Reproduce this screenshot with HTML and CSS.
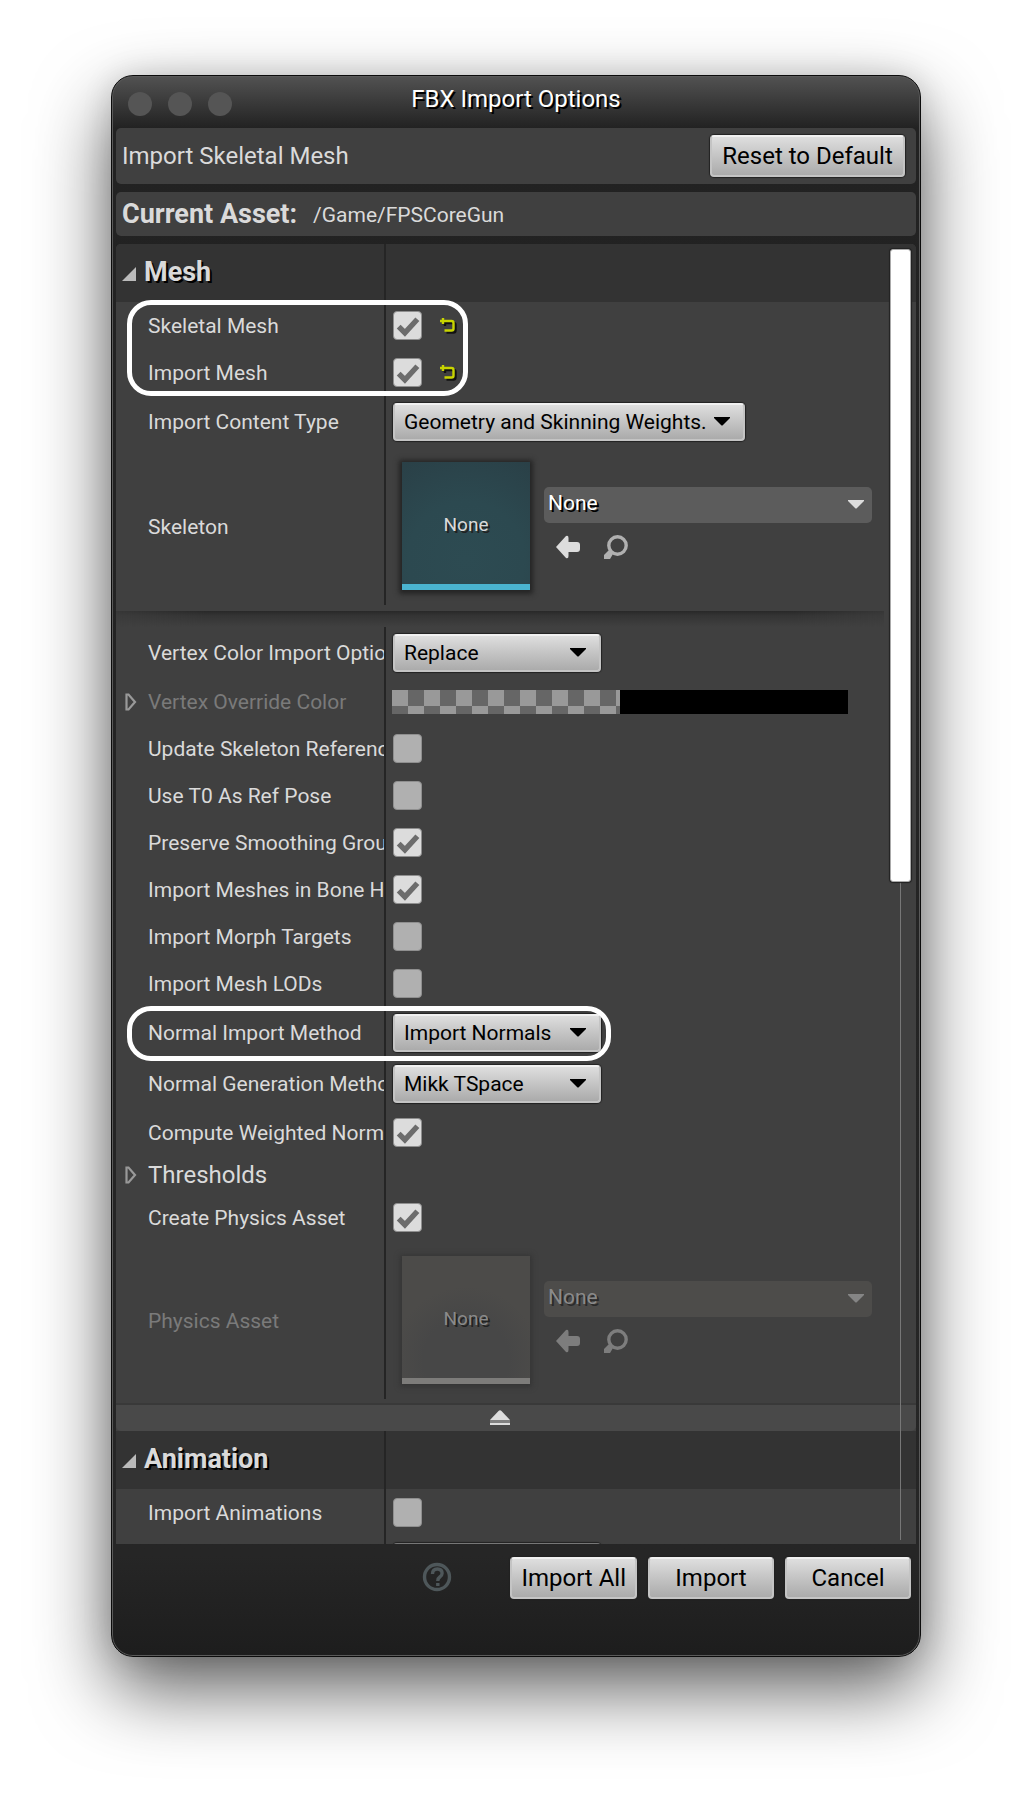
FILE: index.html
```html
<!DOCTYPE html>
<html lang="en">
<head>
<meta charset="utf-8">
<title>FBX Import Options</title>
<link rel="stylesheet" href="styles.css">
</head>
<body>
<svg class="defs" aria-hidden="true">
  <symbol id="revert" viewBox="0 0 18 18"><path d="M1 4h11.500q2 0 2 2v5.500q0 2-2 2H5.500M4 1v6" fill="none" stroke="currentColor" stroke-width="2.400"/></symbol>
  <symbol id="open" viewBox="0 0 16 16"><path d="M16 0v16H0z" fill="currentColor"/></symbol>
  <symbol id="closed" viewBox="0 0 12 18"><path d="M1.500 1.500h2L10 9l-6.500 7.500h-2z" fill="none" stroke="currentColor" stroke-width="2.200"/></symbol>
  <symbol id="use-arrow" viewBox="0 0 24 24"><path d="M0 12 10 1q2.500-1 2.500 2v4H21q3 0 3 3v4q0 3-3 3h-8.500v4q0 3-2.500 2z" fill="currentColor"/></symbol>
  <symbol id="browse" viewBox="0 0 24 24"><circle cx="13.500" cy="10.500" r="8.700" fill="none" stroke="currentColor" stroke-width="3.400"/><path d="M0 24v-4l5-5 4 4-3 5z" fill="currentColor"/></symbol>
</svg>
<main class="window">
  <header class="titlebar">
    <div class="lights"><span class="light"></span><span class="light"></span><span class="light"></span></div>
    <h1 class="title">FBX Import Options</h1>
  </header>

  <section class="panel panel-type">
    <span class="type">Import Skeletal Mesh</span>
    <button class="btn btn-reset">Reset to Default</button>
  </section>
  <section class="panel panel-asset">
    <strong class="asset-label">Current Asset:</strong>
    <span class="asset-path">/Game/FPSCoreGun</span>
  </section>

  <section class="list">
    <div class="header"><h2 class="name"><svg class="tri"><use href="#open"/></svg>Mesh</h2></div>

    <div class="marked marked-mesh">
      <div class="row"><div class="name"><label for="skeletal">Skeletal Mesh</label></div><div class="value"><input type="checkbox" id="skeletal" checked><button class="revert" aria-label="Revert"><svg><use href="#revert"/></svg></button></div></div>
      <div class="row"><div class="name"><label for="mesh">Import Mesh</label></div><div class="value"><input type="checkbox" id="mesh" checked><button class="revert" aria-label="Revert"><svg><use href="#revert"/></svg></button></div></div>
    </div>
    <div class="row row-combo"><div class="name"><label for="content">Import Content Type</label></div><div class="value"><select id="content" class="combo combo-wide"><option>Geometry and Skinning Weights.</option></select></div></div>
    <div class="row row-asset"><div class="name"><label for="skeleton">Skeleton</label></div><div class="value">
      <div class="thumb">None</div>
      <div class="picker">
        <select id="skeleton" class="asset-combo"><option>None</option></select>
        <div class="tools"><button aria-label="Use selected"><svg><use href="#use-arrow"/></svg></button><button class="dim" aria-label="Browse"><svg><use href="#browse"/></svg></button></div>
      </div>
    </div></div>
    <div class="divider"></div>

    <div class="row row-combo"><div class="name"><label for="vcolor">Vertex Color Import Option</label></div><div class="value"><select id="vcolor" class="combo"><option>Replace</option></select></div></div>
    <div class="row disabled"><div class="name"><button class="expand" aria-label="Expand"><svg><use href="#closed"/></svg></button><span>Vertex Override Color</span></div><div class="value"><div class="swatch"><span class="alpha"></span><span class="solid"></span></div></div></div>
    <div class="row"><div class="name"><label for="update">Update Skeleton Reference Pose</label></div><div class="value"><input type="checkbox" id="update"></div></div>
    <div class="row"><div class="name"><label for="t0">Use T0 As Ref Pose</label></div><div class="value"><input type="checkbox" id="t0"></div></div>
    <div class="row"><div class="name"><label for="smooth">Preserve Smoothing Groups</label></div><div class="value"><input type="checkbox" id="smooth" checked></div></div>
    <div class="row"><div class="name"><label for="bone">Import Meshes in Bone Hierarchy</label></div><div class="value"><input type="checkbox" id="bone" checked></div></div>
    <div class="row"><div class="name"><label for="morph">Import Morph Targets</label></div><div class="value"><input type="checkbox" id="morph"></div></div>
    <div class="row"><div class="name"><label for="lods">Import Mesh LODs</label></div><div class="value"><input type="checkbox" id="lods"></div></div>
    <div class="marked marked-normals">
      <div class="row row-combo"><div class="name"><label for="nimport">Normal Import Method</label></div><div class="value"><select id="nimport" class="combo"><option>Import Normals</option></select></div></div>
    </div>
    <div class="row row-combo"><div class="name"><label for="ngen">Normal Generation Method</label></div><div class="value"><select id="ngen" class="combo"><option>Mikk TSpace</option></select></div></div>
    <div class="row"><div class="name"><label for="weighted">Compute Weighted Normals</label></div><div class="value"><input type="checkbox" id="weighted" checked></div></div>
    <div class="row row-group"><div class="name"><button class="expand" aria-label="Expand"><svg><use href="#closed"/></svg></button><span>Thresholds</span></div><div class="value"></div></div>
    <div class="row"><div class="name"><label for="physics">Create Physics Asset</label></div><div class="value"><input type="checkbox" id="physics" checked></div></div>
    <div class="row row-asset disabled"><div class="name"><label for="passet">Physics Asset</label></div><div class="value">
      <div class="thumb">None</div>
      <div class="picker">
        <select id="passet" class="asset-combo" disabled><option>None</option></select>
        <div class="tools"><button aria-label="Use selected" disabled><svg><use href="#use-arrow"/></svg></button><button aria-label="Browse" disabled><svg><use href="#browse"/></svg></button></div>
      </div>
    </div></div>
    <button class="collapse" aria-label="Hide advanced"><svg viewBox="0 0 20 15"><path d="M0 10 8.500 1q1.500-1.500 3 0L20 10z" fill="#dcdcdc"/><path d="M0 10h20v3H0z" fill="#808080"/><path d="M0 13h20v2H0z" fill="#dcdcdc"/></svg></button>

    <div class="header"><h2 class="name"><svg class="tri"><use href="#open"/></svg>Animation</h2></div>
    <div class="row"><div class="name"><label for="anims">Import Animations</label></div><div class="value"><input type="checkbox" id="anims"></div></div>
    <div class="row row-combo disabled"><div class="name"></div><div class="value"><select class="combo" disabled aria-label="Animation length"></select></div></div>

    <div class="scrollbar"><div class="scroll-thumb"></div></div>
  </section>

  <footer class="footer">
    <button class="help" aria-label="Help"><svg viewBox="0 0 30 30" fill="none" stroke="#4e575a"><circle cx="15" cy="15" r="12.500" stroke-width="3.400"/><path d="M10.500 12q0-5 4.800-5t4.800 4.300q0 2.200-2.300 3.700-2 1.300-2 4M15.800 21v3" stroke-width="3.400"/></svg></button>
    <button class="btn">Import All</button>
    <button class="btn">Import</button>
    <button class="btn">Cancel</button>
  </footer>
</main>
</body>
</html>
```
FILE: styles.css
```css
*, ::after { box-sizing: border-box; }

body {
  margin: 0;
  padding: 75px 111px 147px;
  height: 100vh;
  background: #fff;
  color: #dadada;
  font: 21px/24px Roboto, "Liberation Sans", sans-serif;
}

button, select, input { margin: 0; font: inherit; color: inherit; }
button { padding: 0; border: 0; background: none; }
svg { display: block; }
.defs { display: none; }

.window {
  height: 100%;
  min-height: 700px;
  display: flex;
  flex-direction: column;
  padding: 0 4px;
  border: 1px solid #0c0c0c;
  border-radius: 22px;
  background: linear-gradient(#525252, #222 52px, #262626 1480px, #1d1d1d);
  box-shadow: inset 0 0 0 1px #5a5a5a, 0 32px 76px rgba(0, 0, 0, .64), 0 0 30px rgba(0, 0, 0, .12);
}

.titlebar {
  flex: none;
  display: grid;
  grid-template-columns: 1fr auto 1fr;
  height: 52px;
}
.lights { display: flex; gap: 16px; padding: 16px 12px; }
.light { width: 24px; height: 24px; border-radius: 50%; background: #555; }
.title {
  margin: 0;
  font-size: 24px;
  font-weight: 400;
  line-height: 46px;
  color: #fff;
  text-shadow: 2px 2px 0 #000;
}

.panel {
  flex: none;
  display: flex;
  align-items: center;
  margin-bottom: 8px;
  padding: 0 11px 0 6px;
  border-radius: 5px;
  background: #404040;
}
.panel-type { height: 56px; justify-content: space-between; font-size: 24px; }
.panel-asset { height: 44px; gap: 16px; }
.asset-label { font-size: 27px; }
.asset-path { padding-top: 2px; }

.btn {
  min-width: 126px;
  height: 42px;
  padding: 0 9px;
  border: 2px solid #c4c4c4;
  border-top-color: #f0f0f0;
  border-radius: 4px;
  background: linear-gradient(#dedede, #c4c4c4 50%, #ababab);
  box-shadow: 0 0 1px 1px #222;
  color: #000;
  font-size: 24px;
}
.btn-reset { min-width: 195px; }

.list {
  position: relative;
  flex: 1;
  min-height: 0;
  overflow: hidden;
  border-radius: 5px 5px 0 0;
  background: #404040;
}

.header {
  display: flex;
  height: 58px;
  background: #333;
}
.header .name {
  gap: 8px;
  margin: 0;
  padding: 0 0 2px 6px;
  font-size: 27px;
  font-weight: 700;
  text-shadow: 2px 2px 0 #000;
}
.tri { width: 14px; height: 14px; margin-top: 4px; color: #bbb; }

.row {
  display: flex;
  height: 47px;
  margin-right: 32px;
}
.row-combo { height: 51px; }
.row-asset { height: 158px; }
.row-group { height: 38px; }
.row-group .name { font-size: 24px; }

.name {
  flex: none;
  display: flex;
  align-items: center;
  width: 270px;
  overflow: hidden;
  border-right: 2px solid #252525;
  white-space: nowrap;
}
.row .name { padding-left: 32px; }
.row-asset .name { padding-top: 2px; }
.expand { flex: none; width: 23px; margin-left: -23px; color: #999; }
.expand svg { width: 12px; height: 18px; }
.value { flex: 1; display: flex; align-items: center; padding: 0 12px 0 7px; }
.disabled .name { color: #7a7a7a; }
.disabled .expand { color: #999; }

input[type="checkbox"] {
  flex: none;
  appearance: none;
  width: 29px;
  height: 29px;
  border: 1px solid #8f8f8f;
  border-radius: 4px;
  background: #b0b0b0;
}
input[type="checkbox"]:checked {
  background: #dcdcdc url("data:image/svg+xml,%3Csvg xmlns='http://www.w3.org/2000/svg' viewBox='0 0 26 26'%3E%3Cpath d='M4.500 14l6 6L22.500 7' fill='none' stroke='%236c6c6c' stroke-width='5.200'/%3E%3C/svg%3E");
}

.revert { margin-left: 17px; color: #c8d400; filter: drop-shadow(2px 2px 0 #111); }
.revert svg { width: 18px; height: 18px; }

.combo {
  appearance: none;
  width: 208px;
  height: 38px;
  padding: 0 40px 0 9px;
  border: 2px solid #c4c4c4;
  border-top-color: #f0f0f0;
  border-radius: 4px;
  background:
    url("data:image/svg+xml,%3Csvg xmlns='http://www.w3.org/2000/svg' viewBox='0 0 16 9'%3E%3Cpath d='M0 0h16v1L9 8q-1 1-2 0L0 1z'/%3E%3C/svg%3E") right 13px center / 16px 9px no-repeat,
    linear-gradient(#dedede, #c4c4c4 50%, #ababab);
  box-shadow: 0 0 1px 1px #222;
  color: #000;
}
.combo-wide { width: 352px; padding-right: 32px; }
.disabled .combo { border-color: #777; opacity: 1; }

.thumb {
  flex: none;
  display: flex;
  align-items: center;
  justify-content: center;
  width: 128px;
  height: 128px;
  margin: 0 14px 0 9px;
  padding-top: 4px;
  border-bottom: 6px solid #4ab4d0;
  background: radial-gradient(circle at 50% 80%, #2d4b52, #2c4950 50%, #2a4047);
  box-shadow: 0 1px 5px 3px #242424;
  font-size: 19px;
  text-shadow: 2px 2px 0 #222;
}
.picker { flex: 1; display: flex; flex-direction: column; gap: 12px; padding-bottom: 7px; }
.asset-combo {
  appearance: none;
  width: 100%;
  height: 36px;
  padding: 0 40px 4px 4px;
  border: 0;
  border-radius: 5px;
  background: #5c5c5c url("data:image/svg+xml,%3Csvg xmlns='http://www.w3.org/2000/svg' viewBox='0 0 16 9'%3E%3Cpath d='M0 0h16v1L9 8q-1 1-2 0L0 1z' fill='%23dcdcdc'/%3E%3C/svg%3E") right 8px center / 16px 9px no-repeat;
  color: #fff;
  text-shadow: 2px 2px 0 #000;
}
.tools { display: flex; gap: 24px; padding-left: 12px; color: #dcdcdc; }
.tools .dim { color: #b0b0b0; }
.tools svg { width: 24px; height: 24px; }

.disabled .thumb {
  border-color: #7d7c7a;
  background: radial-gradient(circle at 50% 85%, #474747 35%, #4c4b49 60%);
  box-shadow: 0 1px 5px 2px #353535;
  color: #8a8a8a;
}
.disabled .asset-combo {
  background: #4d4c4a url("data:image/svg+xml,%3Csvg xmlns='http://www.w3.org/2000/svg' viewBox='0 0 16 9'%3E%3Cpath d='M0 0h16v1L9 8q-1 1-2 0L0 1z' fill='%23858585'/%3E%3C/svg%3E") right 8px center / 16px 9px no-repeat;
  color: #8a8a8a;
  text-shadow: 2px 2px 0 #2a2a2a;
  opacity: 1;
}
.disabled .tools { color: #7d7d7d; }

.divider {
  height: 16px;
  margin: 6px 32px 0 0;
  background: linear-gradient(#282828, #343434 30%, #404040);
  mask-image: linear-gradient(90deg, rgba(0, 0, 0, .4), #000 12%, #000 88%, rgba(0, 0, 0, .4));
}

.swatch { display: flex; flex: 1; height: 24px; margin: 0 24px 0 -1px; }
.swatch span { flex: 1; }
.alpha { background: repeating-conic-gradient(#666 0 25%, #999 0 50%) 0 0 / 32px 32px; }
.solid { background: #000; }

.marked { position: relative; }
.marked::after {
  content: "";
  position: absolute;
  left: 11px;
  border: 5px solid #fff;
  border-radius: 24px;
  pointer-events: none;
  z-index: 1;
}
.marked-mesh::after { top: -2px; width: 341px; height: 96px; }
.marked-normals::after { top: -1px; width: 484px; height: 55px; }

.collapse {
  display: block;
  width: 100%;
  height: 28px;
  margin-top: 4px;
  padding: 0 32px 2px 0;
  border-top: 2px solid #393939;
  border-radius: 0 0 5px 5px;
  background: #494949;
}
.collapse svg { width: 20px; height: 15px; margin: 0 auto; }

.scrollbar {
  position: absolute;
  top: 5px;
  right: 5px;
  bottom: 4px;
  width: 21px;
  background: linear-gradient(#777, #777) center / 1px 100% no-repeat;
}
.scroll-thumb {
  height: 49%;
  border: 1px solid #aaa;
  border-radius: 3px;
  background: #fff;
  box-shadow: 0 0 1px 1px #222;
}

.footer {
  flex: none;
  display: flex;
  justify-content: flex-end;
  align-items: flex-start;
  gap: 11px;
  height: 112px;
  padding: 13px 5px 0;
}
.help { margin: 5px 47px 0 0; }
.help svg { width: 30px; height: 30px; }
```
